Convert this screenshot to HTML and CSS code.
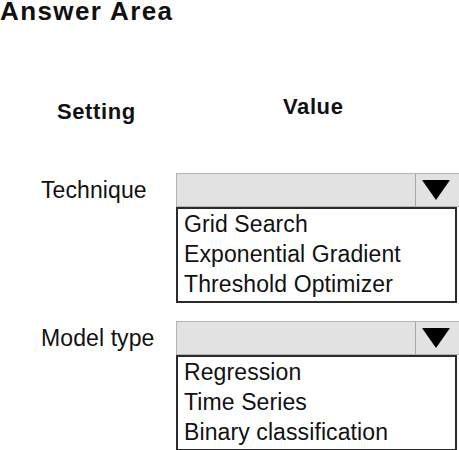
FILE: index.html
```html
<!DOCTYPE html>
<html>
<head>
<meta charset="utf-8">
<link rel="stylesheet" href="styles.css">
</head>
<body>
<h1 class="title">Answer Area</h1>
<div class="heads">
  <div class="head head-setting">Setting</div>
  <div class="head head-value">Value</div>
</div>
<div class="grid">
  <div class="label">Technique</div>
  <div class="dropdown">
    <div class="select">
      <div class="select-field"></div>
      <div class="select-arrow"><span class="tri"></span></div>
    </div>
    <ul class="options">
      <li>Grid Search</li>
      <li>Exponential Gradient</li>
      <li>Threshold Optimizer</li>
    </ul>
  </div>
  <div class="label">Model type</div>
  <div class="dropdown">
    <div class="select">
      <div class="select-field"></div>
      <div class="select-arrow"><span class="tri"></span></div>
    </div>
    <ul class="options">
      <li>Regression</li>
      <li>Time Series</li>
      <li>Binary classification</li>
    </ul>
  </div>
</div>
</body>
</html>
```
FILE: styles.css
```css
html, body {
  margin: 0;
  padding: 0;
  background: #fff;
  overflow: hidden;
}
body {
  font-family: "Liberation Sans", Arial, sans-serif;
  color: #111;
  width: 459px;
  height: 450px;
}
.title {
  margin: 0;
  font-size: 26px;
  font-weight: bold;
  line-height: 23px;
  height: 22px;
  letter-spacing: 1.4px;
}
.heads {
  display: grid;
  grid-template-columns: 176px 1fr;
  margin-top: 72px;
  height: 79px;
}
.head {
  font-size: 22px;
  font-weight: bold;
  line-height: 26px;
  letter-spacing: 0.6px;
}
.head-setting {
  padding-left: 57px;
  padding-top: 5px;
}
.head-value {
  padding-left: 107px;
}
.grid {
  display: grid;
  grid-template-columns: 176px 283px;
  row-gap: 18px;
}
.label {
  font-size: 23px;
  line-height: 34px;
  padding-left: 41px;
  letter-spacing: 0.1px;
}
.dropdown {
  display: flex;
  flex-direction: column;
}
.select {
  display: flex;
  height: 34px;
  box-sizing: border-box;
  background: #e2e2e2;
  border: 1px solid #b4b4b4;
  border-right: none;
}
.select-field {
  flex: 1;
}
.select-arrow {
  width: 43px;
  border-left: 1px solid #a8a8a8;
  display: flex;
  align-items: center;
  justify-content: center;
}
.tri {
  width: 0;
  height: 0;
  border-left: 14px solid transparent;
  border-right: 14px solid transparent;
  border-top: 20px solid #000;
  margin-left: -4px;
}
.options {
  list-style: none;
  margin: 0;
  padding: 0 0 2px 6px;
  width: 281px;
  box-sizing: border-box;
  border: 2px solid #2b2b2b;
  font-size: 23px;
  line-height: 30px;
  height: 96px;
  letter-spacing: 0.1px;
}
.options li {
  white-space: nowrap;
}
```
